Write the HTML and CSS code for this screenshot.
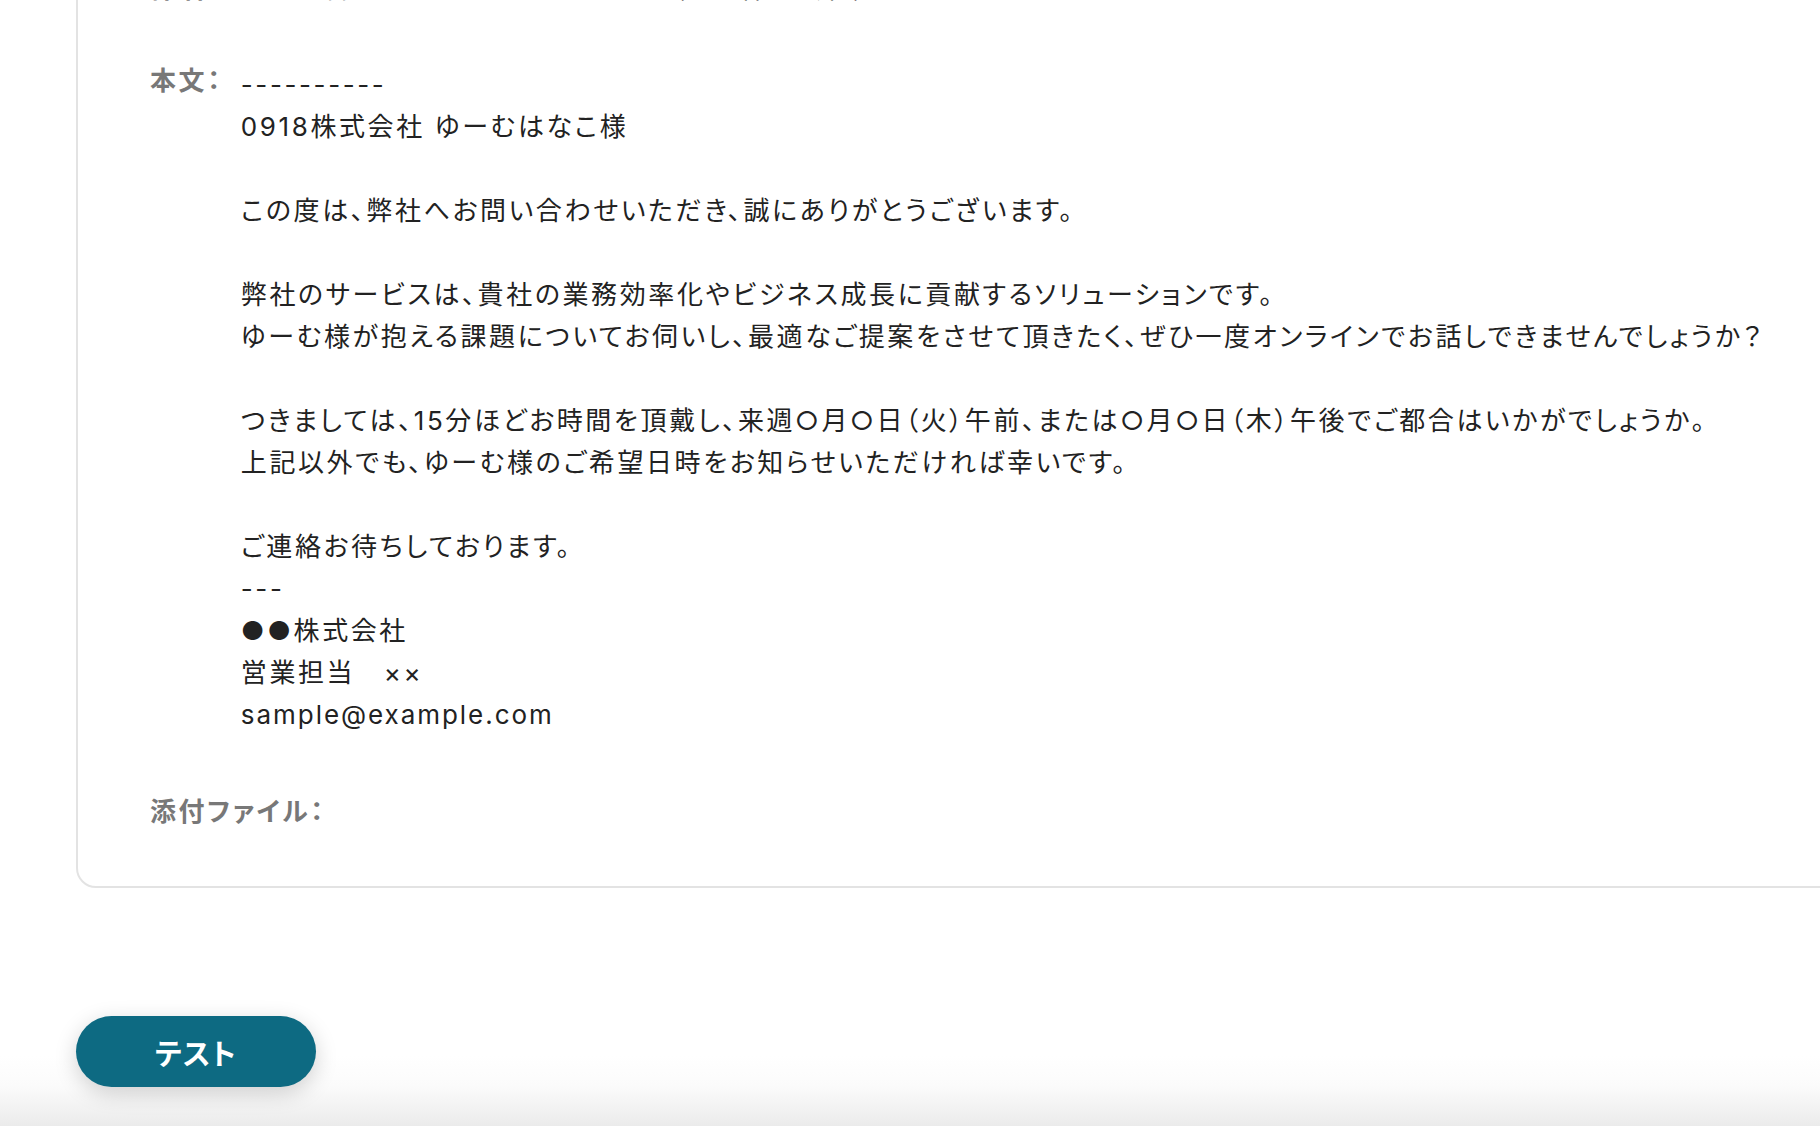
FILE: index.html
```html
<!DOCTYPE html>
<html lang="ja">
<head>
<meta charset="utf-8">
<title>メール送信設定</title>
<link rel="stylesheet" href="styles.css">
</head>
<body>
<main class="page">
  <section class="card">
    <div class="row">
      <div class="label">件名：</div>
      <div class="value">お問い合わせありがとうございます（●●株式会社）</div>
    </div>
    <div class="row">
      <div class="label">本文：</div>
      <div class="value multiline">----------
0918株式会社 ゆーむはなこ様

この度は、弊社へお問い合わせいただき、誠にありがとうございます。

弊社のサービスは、貴社の業務効率化やビジネス成長に貢献するソリューションです。
ゆーむ様が抱える課題についてお伺いし、最適なご提案をさせて頂きたく、ぜひ一度オンラインでお話しできませんでしょうか？

つきましては、15分ほどお時間を頂戴し、来週○月○日（火）午前、または○月○日（木）午後でご都合はいかがでしょうか。
上記以外でも、ゆーむ様のご希望日時をお知らせいただければ幸いです。

ご連絡お待ちしております。
---
●●株式会社
営業担当　××
<span class="latin">sample@example.com</span></div>
    </div>
    <div class="row row-attach">
      <div class="label">添付ファイル：</div>
    </div>
  </section>
</main>
<footer class="footer">
  <button class="btn-test" type="button">テスト</button>
</footer>
</body>
</html>
```

FILE: styles.css
```css
html, body {
  margin: 0;
  padding: 0;
}

body {
  width: 1820px;
  height: 1126px;
  overflow: hidden;
  background: #ffffff;
  font-family: Inter, "Noto Sans CJK JP", sans-serif;
  font-feature-settings: "palt";
  color: #222222;
  display: flex;
  flex-direction: column;
}

.page {
  padding-left: 76px;
}

.card {
  margin-top: -82px;
  margin-right: -80px;
  border: 2px solid #e3e3e3;
  border-radius: 20px;
  padding: 48px 0 57px 72px;
  background: #ffffff;
}

.row {
  display: flex;
  align-items: flex-start;
  gap: 18px;
  font-size: 26px;
  letter-spacing: 0.1em;
}

.row + .row {
  margin-top: 54px;
}

.row.row-attach {
  margin-top: 59px;
}

.label {
  flex: none;
  line-height: 34px;
  color: #787878;
  font-weight: 600;
}

.value {
  line-height: 42px;
  color: #222222;
}

.multiline {
  white-space: pre-line;
}

.latin {
  letter-spacing: 0.075em;
}

.row:first-child .label {
  line-height: 42px;
}

.footer {
  flex: 1;
  margin-top: 128px;
  padding-left: 76px;
  background: linear-gradient(to bottom, #ffffff 0px, #ffffff 40px, #fbfbfb 70px, #ebebeb 110px);
}

.btn-test {
  width: 240px;
  height: 71px;
  border: none;
  border-radius: 36px;
  background: #0d6a82;
  color: #ffffff;
  font-family: Inter, "Noto Sans CJK JP", sans-serif;
  font-feature-settings: "palt";
  font-size: 29px;
  font-weight: 700;
  letter-spacing: 0.04em;
  box-shadow: 0 6px 22px rgba(0, 0, 0, 0.18);
  cursor: pointer;
}
```
